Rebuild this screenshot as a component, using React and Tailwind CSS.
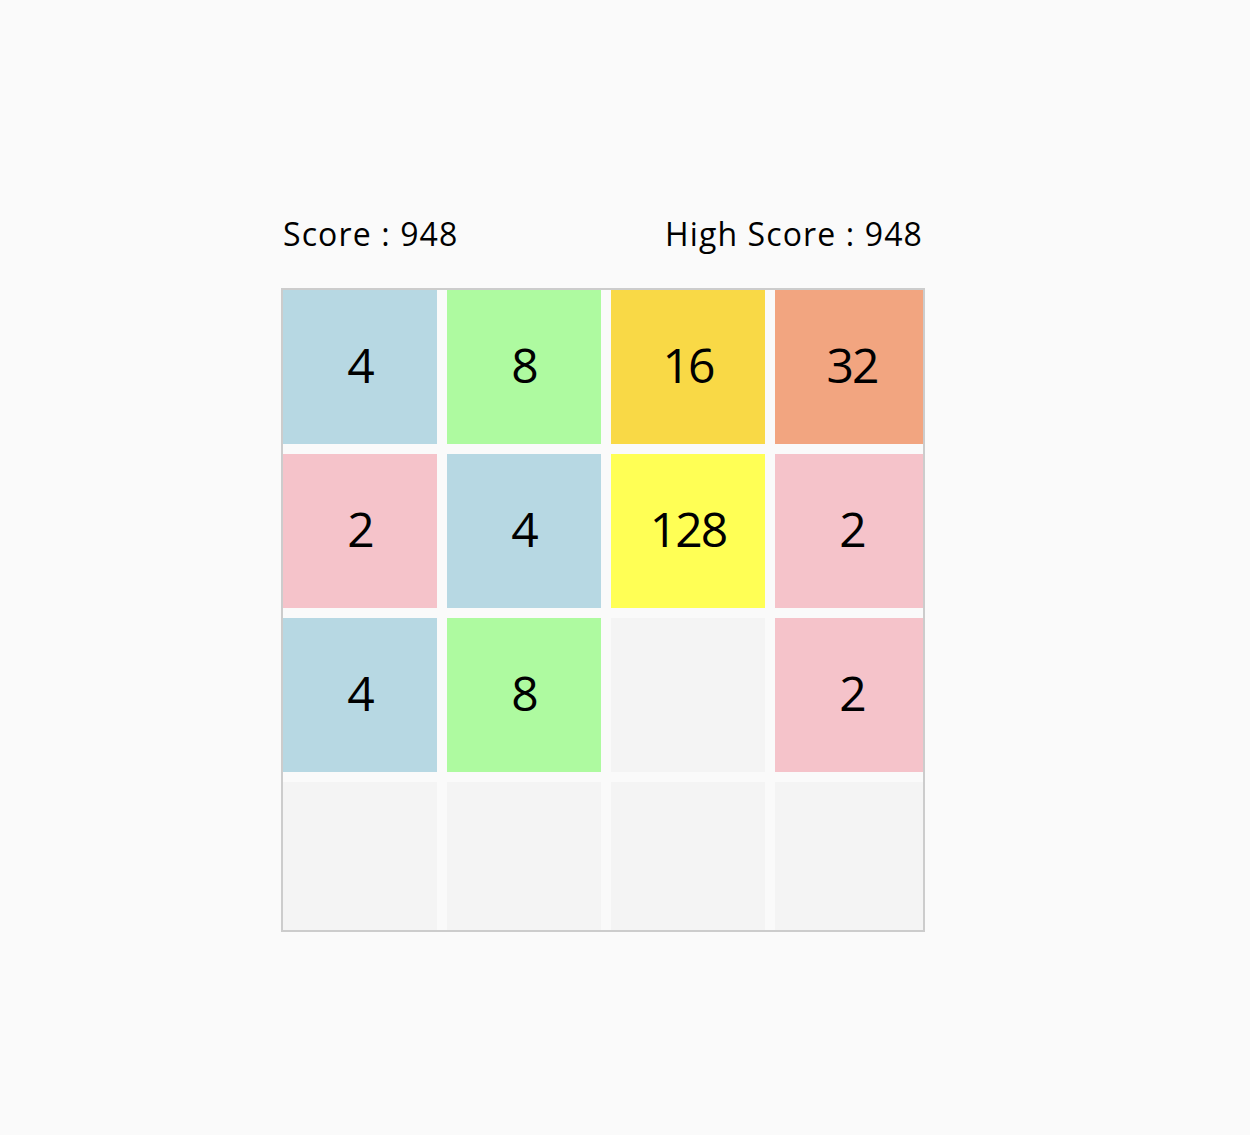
import React from 'react';

const board = [
    [4, 8, 16, 32],
    [2, 4, 128, 2],
    [4, 8, 0, 2],
    [0, 0, 0, 0],
];

const tileColors = {
    0: 'bg-[#f4f4f4]',
    2: 'bg-[#f5c3ca]',
    4: 'bg-[#b7d8e3]',
    8: 'bg-[#aefaa0]',
    16: 'bg-[#f9d946]',
    32: 'bg-[#f2a580]',
    128: 'bg-[#ffff55]',
};

function Tile({ value }) {
    return (
        <div className={`${tileColors[value]} flex items-center justify-center pb-[4px] text-[48px] tracking-[-0.04em] text-black`}>
            {value !== 0 ? value : ''}
        </div>
    );
}

function App() {
    return (
        <div className='min-h-screen bg-[#fafafa] pt-[214px] font-["Open_Sans",sans-serif]'>
            <div className='w-[644px] ml-[281px]'>

                {/* ---------- scores ---------- */}
                <div className='flex justify-between items-center h-[40px] px-[2px] text-[32px] tracking-[0.035em] text-black'>
                    <p>Score : 948</p>
                    <p>High Score : 948</p>
                </div>

                {/* ---------- board ---------- */}
                <div className='mt-[34px] w-[644px] h-[644px] border-2 border-[#cccccc] overflow-hidden'>
                    <div className='grid grid-cols-[repeat(4,154px)] grid-rows-[repeat(4,154px)] gap-[10px]'>
                        {board.flat().map((v, i) => (
                            <Tile key={i} value={v} />
                        ))}
                    </div>
                </div>
            </div>
        </div>
    );
}

export default App;
